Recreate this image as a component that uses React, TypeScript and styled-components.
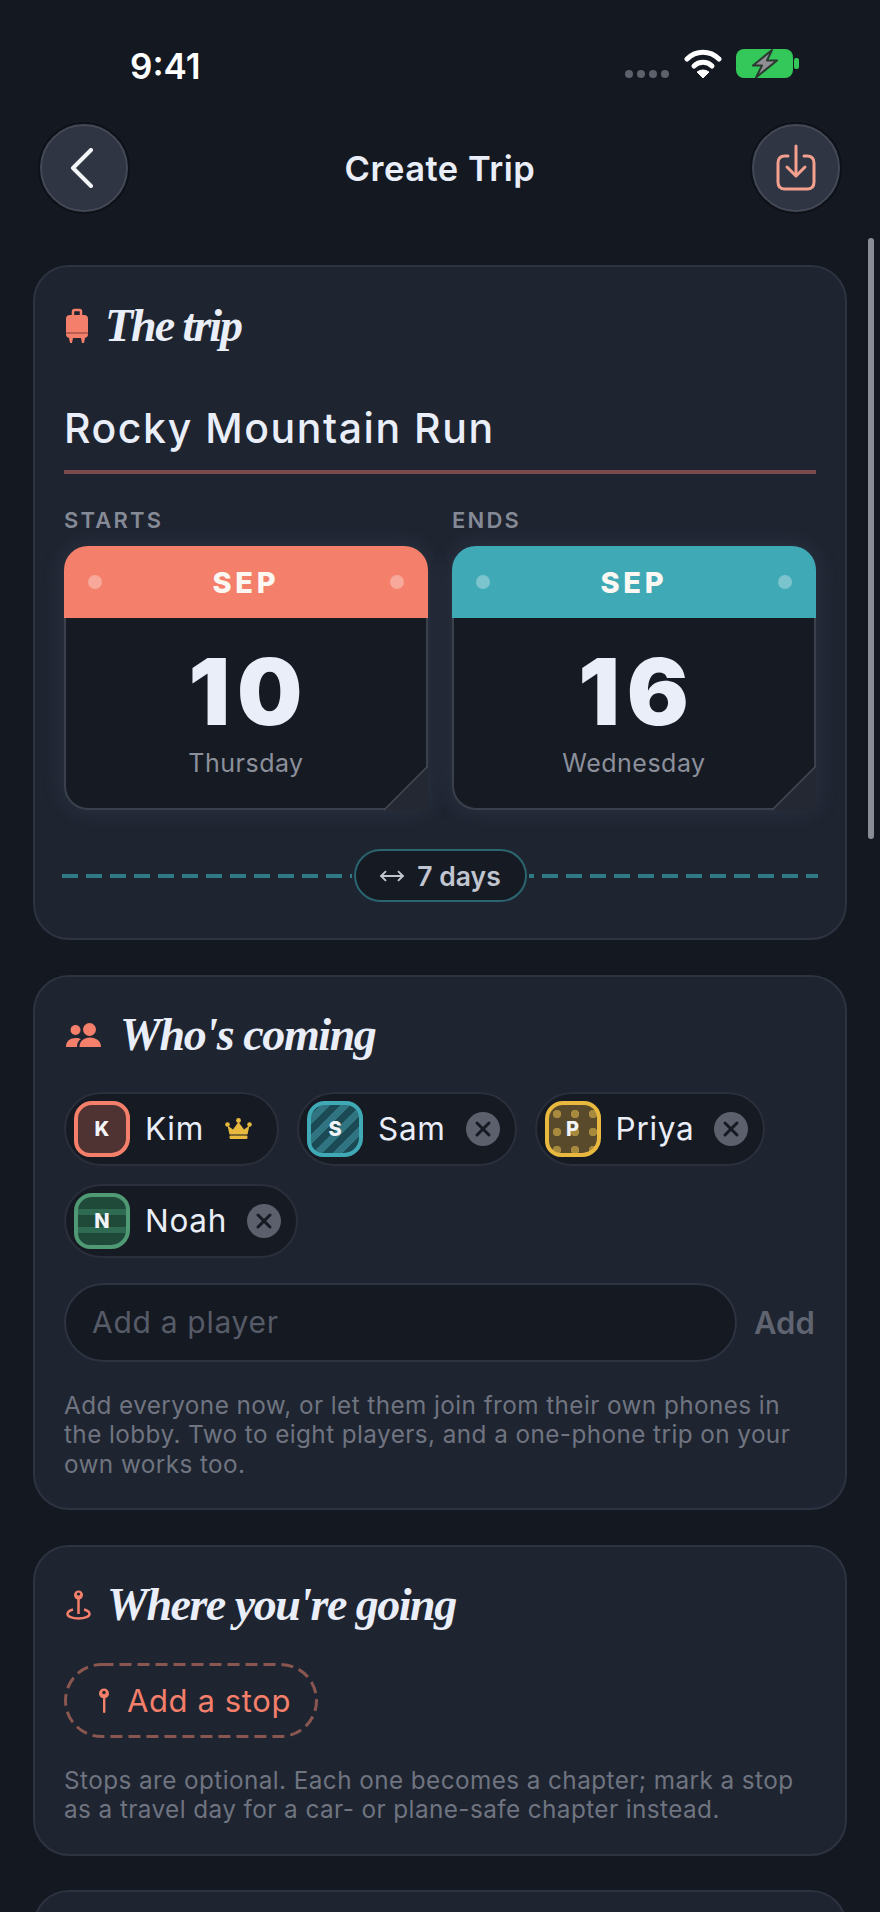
import React from 'react';
import styled, { createGlobalStyle, css } from 'styled-components';
import { MoveHorizontal, X } from 'lucide-react';

const coral = '#f47f6a';
const teal = '#3fa9b5';
const gold = '#e8b93e';
const green = '#4f9a74';

const GlobalStyle = createGlobalStyle`
  html, body {
    margin: 0;
    padding: 0;
    background: #141821;
  }
  * {
    box-sizing: border-box;
  }
`;

const Page = styled.div`
  position: relative;
  width: 880px;
  height: 1912px;
  overflow: hidden;
  background: #141821;
  color: #e9eef8;
  font-family: Inter, 'Noto Sans', sans-serif;
`;

const StatusBar = styled.div`
  height: 124px;
  padding: 44px 81px 0 130px;
  display: flex;
  justify-content: space-between;
  align-items: flex-start;
`;

const Time = styled.div`
  font-family: Inter, sans-serif;
  font-size: 35px;
  line-height: 44px;
  font-weight: 600;
  color: #fff;
`;

const StatusIcons = styled.div`
  display: flex;
  align-items: flex-start;
  gap: 14px;
  margin-top: 5px;
`;

const SignalDots = styled.div`
  display: flex;
  gap: 4px;
  margin: 21px 1px 0 0;
`;

const SignalDot = styled.span`
  width: 8px;
  height: 8px;
  border-radius: 50%;
  background: #5d616b;
`;

const Header = styled.div`
  height: 88px;
  padding: 0 40px;
  display: flex;
  justify-content: space-between;
  align-items: center;
`;

const RoundButton = styled.button`
  width: 88px;
  height: 88px;
  padding: 0;
  border-radius: 50%;
  background: #2f3542;
  border: 2px solid #434956;
  box-shadow: 0 0 0 2px #0e1118;
  display: flex;
  align-items: center;
  justify-content: center;
`;

const BackChevron = styled.svg`
  margin-right: 5px;
`;

const Title = styled.div`
  font-size: 34.5px;
  font-weight: 600;
  letter-spacing: 0.5px;
`;

const Scrollbar = styled.div`
  position: absolute;
  left: 868px;
  top: 238px;
  width: 6px;
  height: 601px;
  border-radius: 3px;
  background: #8a8d96;
`;

const List = styled.div`
  margin-top: 53px;
  padding: 0 33px;
  display: flex;
  flex-direction: column;
  gap: 34.5px;
`;

const Card = styled.section`
  background: #1e2430;
  border: 2px solid #2d3340;
  border-radius: 36px;
  padding: 33px 29px 29px;
`;

const TripCard = styled(Card)`
  padding-bottom: 36px;
`;

const SectionHead = styled.div<{ $gap: number }>`
  height: 50px;
  display: flex;
  align-items: center;
  gap: ${(p) => p.$gap}px;
  padding-left: 2px;
`;

const SectionTitle = styled.h2<{ $spacing: number }>`
  margin: 0;
  font-family: 'Liberation Serif', serif;
  font-style: italic;
  font-weight: 700;
  font-size: 46px;
  letter-spacing: ${(p) => p.$spacing}px;
  color: #e9eef8;
`;

const TripName = styled.div`
  margin-top: 55px;
  padding-bottom: 19px;
  border-bottom: 4px solid #7b4a4c;
  font-size: 41px;
  line-height: 46px;
  font-weight: 500;
  letter-spacing: 1.55px;
`;

const DateGrid = styled.div`
  margin-top: 33px;
  display: grid;
  grid-template-columns: 1fr 1fr;
  gap: 24px;
`;

const DateLabel = styled.div`
  font-size: 22px;
  line-height: 26px;
  font-weight: 600;
  letter-spacing: 2.2px;
  color: #858a96;
`;

const Calendar = styled.div`
  position: relative;
  margin-top: 13px;
  height: 264px;
  background: #161a23;
  border: 2px solid #3a404c;
  border-top: 0;
  border-radius: 24px 24px 0 24px;
  box-shadow: 0 0 24px rgba(150, 165, 195, 0.14);
  text-align: center;
`;

const CalendarTop = styled.div<{ $color: string }>`
  height: 72px;
  margin: 0 -2px;
  padding: 0 24px;
  border-radius: 24px 24px 0 0;
  background: ${(p) => p.$color};
  display: flex;
  align-items: center;
  justify-content: space-between;
`;

const Hole = styled.span`
  width: 14px;
  height: 14px;
  border-radius: 50%;
  background: rgba(255, 255, 255, 0.32);
`;

const Month = styled.span`
  font-size: 29px;
  font-weight: 800;
  letter-spacing: 3.8px;
  color: #fbf7f2;
`;

const DayNumber = styled.div`
  margin-top: 29px;
  font-size: 92px;
  line-height: 90px;
  font-weight: 900;
  letter-spacing: 7px;
  padding-left: 6px;
`;

const Weekday = styled.div`
  margin-top: 11px;
  font-size: 25px;
  line-height: 30px;
  color: #8c909b;
  letter-spacing: 0.5px;
`;

const CornerFold = styled.svg`
  position: absolute;
  right: -2px;
  bottom: -2px;
`;

const DurationRow = styled.div`
  margin: 39px -2px 0;
  height: 53px;
  display: flex;
  align-items: center;
`;

const DashRule = styled.div<{ $offset: number }>`
  flex: 1;
  height: 4px;
  background: repeating-linear-gradient(90deg, #2f7a85 0 16px, transparent 16px 24px);
  background-size: 24px 4px;
  background-position: ${(p) => p.$offset}px 0;
`;

const DurationPill = styled.div`
  width: 173px;
  height: 53px;
  margin: 0 2px;
  flex: none;
  border-radius: 27px;
  border: 2px solid #2a6570;
  background: #161a23;
  display: flex;
  align-items: center;
  justify-content: center;
  gap: 12px;
  font-size: 26.5px;
  font-weight: 600;
  color: #c0c5d0;
`;

const Chips = styled.div`
  margin-top: 32px;
  display: flex;
  flex-wrap: wrap;
  gap: 18px;
`;

const Chip = styled.div`
  height: 74px;
  padding: 0 0 0 8px;
  border-radius: 37px;
  border: 2px solid #2a2f3b;
  background: #161a23;
  display: flex;
  align-items: center;
  gap: 15px;
`;

const patterns = {
  solid: css`
    background: #4f3232;
  `,
  stripes: css`
    background: repeating-linear-gradient(135deg, #1b4a55 0 7px, #2f7480 7px 14px);
  `,
  dots: css`
    background-color: #5a4a2c;
    background-image: radial-gradient(circle, #a88a3f 4px, transparent 4.5px);
    background-size: 18px 18px;
    background-position: -1px 0;
  `,
  bars: css`
    background: repeating-linear-gradient(0deg, #1f4a3a 0 12px, #2f6a52 12px 18px);
  `,
};

const Avatar = styled.div<{ $color: string; $pattern: keyof typeof patterns }>`
  width: 56px;
  height: 56px;
  flex: none;
  border: 4px solid ${(p) => p.$color};
  border-radius: 18px 17px 19px 16px;
  ${(p) => patterns[p.$pattern]}
  display: flex;
  align-items: center;
  justify-content: center;
  font-size: 20px;
  font-weight: 800;
  color: #f2f4f8;
`;

const ChipName = styled.span`
  font-size: 31.5px;
  letter-spacing: 0.7px;
  color: #e9eef8;
`;

const HostCrown = styled.svg`
  margin: 0 25px 0 6px;
`;

const RemoveButton = styled.button`
  width: 34px;
  height: 34px;
  margin: 0 15px 0 5px;
  padding: 0;
  border: 0;
  border-radius: 50%;
  background: #5b606c;
  color: #161a23;
  display: flex;
  align-items: center;
  justify-content: center;
`;

const AddRow = styled.div`
  margin-top: 25px;
  display: flex;
  align-items: center;
  gap: 17px;
`;

const PlayerInput = styled.div`
  flex: 1;
  height: 79px;
  padding-left: 26px;
  border-radius: 40px;
  border: 2px solid #2d3340;
  background: #151922;
  display: flex;
  align-items: center;
  font-size: 30px;
  letter-spacing: 0.7px;
  color: #565b67;
`;

const AddText = styled.span`
  width: 62px;
  font-size: 31px;
  font-weight: 600;
  color: #5f6470;
`;

const Hint = styled.p<{ $top: number }>`
  margin: ${(p) => p.$top}px 0 0;
  font-size: 24.3px;
  line-height: 29.5px;
  letter-spacing: 0.42px;
  color: #6f7480;
  white-space: nowrap;
`;

const StopPill = styled.div`
  position: relative;
  width: 254px;
  height: 75px;
  margin-top: 33px;
  display: flex;
  align-items: center;
  gap: 17px;
  padding-left: 34px;
  font-size: 31px;
  letter-spacing: 0.6px;
  color: ${coral};
`;

const StopOutline = styled.svg`
  position: absolute;
  left: 0;
  top: 0;
`;

const NextCard = styled(Card)`
  height: 200px;
`;

function WifiIcon() {
  return (
    <svg width="38" height="29" viewBox="0 0 38 29">
      <path d="M3 10C12 1 26 1 35 10" fill="none" stroke="#fff" strokeWidth="5" strokeLinecap="round" />
      <path d="M10 17C15 12 23 12 28 17" fill="none" stroke="#fff" strokeWidth="5" strokeLinecap="round" />
      <path d="M13 23Q19 19 25 23L19 29Z" fill="#fff" stroke="#fff" strokeLinejoin="round" />
    </svg>
  );
}

function BatteryIcon() {
  return (
    <svg width="63" height="29" viewBox="0 0 63 29">
      <rect x="0" y="0" width="57" height="29" rx="8" fill="#34c759" />
      <rect x="58" y="9" width="5" height="11" rx="2" fill="#34c759" />
      <path d="M36 1L17 16.5H26L20 28.5L41 11.5H31Z" fill="#8e8e93" stroke="#2a3a30" strokeWidth="2" strokeLinejoin="round" />
    </svg>
  );
}

function SuitcaseIcon() {
  return (
    <svg width="22" height="35" viewBox="0 0 22 35">
      <path d="M7 8V3.5Q7 2 8.5 2H13.5Q15 2 15 3.5V8" fill="none" stroke={coral} strokeWidth="2.5" />
      <rect x="0" y="7" width="22" height="23" rx="4" fill={coral} />
      <rect x="0" y="24" width="22" height="2" fill="#b85f50" />
      <path d="M3 30H7L6 35H4ZM15 30H19L18 35H16Z" fill={coral} />
    </svg>
  );
}

function PeopleIcon() {
  return (
    <svg width="35" height="24" viewBox="0 0 35 24" fill={coral}>
      <circle cx="9.5" cy="7" r="5" />
      <circle cx="23.5" cy="6.5" r="6.5" />
      <path d="M0 24C0 18 4 15 10 15C12 15 13.5 15.5 15 16C12 18 11 20.5 11 24Z" />
      <path d="M13.5 24C13.5 18 18 14.5 24 14.5C30 14.5 35 18 35 24Z" />
    </svg>
  );
}

function MapPinIcon() {
  return (
    <svg width="25" height="31" viewBox="0 0 25 31" fill="none" stroke={coral} strokeWidth="2.5">
      <circle cx="12.5" cy="6" r="4.5" fill={coral} stroke="none" />
      <circle cx="12.5" cy="5" r="1.6" fill="#1e2430" stroke="none" />
      <path d="M12.5 10V25" />
      <path d="M7 20.5C3.5 21.5 1.5 23 1.5 25C1.5 27.5 6 29.5 12.5 29.5C19 29.5 23.5 27.5 23.5 25C23.5 23 21.5 21.5 18 20.5" />
    </svg>
  );
}

function StopPinIcon() {
  return (
    <svg width="12" height="25" viewBox="0 0 12 25">
      <circle cx="6" cy="5.5" r="5" fill={coral} />
      <circle cx="6" cy="4.5" r="1.7" fill="#1e2430" />
      <rect x="5" y="10" width="2.4" height="15" rx="1" fill={coral} />
    </svg>
  );
}

function Crown() {
  return (
    <HostCrown width="27" height="21" viewBox="0 0 27 21" fill={gold}>
      <circle cx="2.5" cy="6.5" r="2.3" />
      <circle cx="13.5" cy="2.5" r="2.4" />
      <circle cx="24.5" cy="6.5" r="2.3" />
      <path d="M2.5 7.5L8 11.5L13.5 4L19 11.5L24.5 7.5L22.5 16.5H4.5Z" />
      <rect x="4.5" y="17.5" width="18" height="3.5" rx="1.2" />
    </HostCrown>
  );
}

function DateCard({ label, color, day, weekday }: { label: string; color: string; day: string; weekday: string }) {
  return (
    <div>
      <DateLabel>{label}</DateLabel>
      <Calendar>
        <CalendarTop $color={color}>
          <Hole />
          <Month>SEP</Month>
          <Hole />
        </CalendarTop>
        <DayNumber>{day}</DayNumber>
        <Weekday>{weekday}</Weekday>
        <CornerFold width="44" height="44" viewBox="0 0 44 44">
          <path d="M0 44L44 0V44Z" fill="#232833" />
          <path d="M0 44L44 0" stroke="#454a55" strokeWidth="1.5" />
        </CornerFold>
      </Calendar>
    </div>
  );
}

type Player = {
  name: string;
  color: string;
  pattern: keyof typeof patterns;
  host?: boolean;
};

const players: Player[] = [
  { name: 'Kim', color: coral, pattern: 'solid', host: true },
  { name: 'Sam', color: teal, pattern: 'stripes' },
  { name: 'Priya', color: gold, pattern: 'dots' },
  { name: 'Noah', color: green, pattern: 'bars' },
];

export default function App() {
  return (
    <Page>
      <GlobalStyle />
      <StatusBar>
        <Time>9:41</Time>
        <StatusIcons>
          <SignalDots>
            <SignalDot />
            <SignalDot />
            <SignalDot />
            <SignalDot />
          </SignalDots>
          <WifiIcon />
          <BatteryIcon />
        </StatusIcons>
      </StatusBar>

      <Header>
        <RoundButton aria-label="Back">
          <BackChevron width="26" height="40" viewBox="0 0 26 40" fill="none" stroke="#f2f4f8" strokeWidth="4" strokeLinecap="round" strokeLinejoin="round">
            <path d="M22 2L4 20L22 38" />
          </BackChevron>
        </RoundButton>
        <Title>Create Trip</Title>
        <RoundButton aria-label="Save">
          <svg width="40" height="48" viewBox="0 0 40 48" fill="none" stroke="#f4a08f" strokeWidth="3" strokeLinecap="round" strokeLinejoin="round">
            <path d="M12 12H9Q2 12 2 19V38Q2 45 9 45H31Q38 45 38 38V19Q38 12 31 12H28" />
            <path d="M20 2V31" />
            <path d="M11 23L20 32L29 23" />
          </svg>
        </RoundButton>
      </Header>

      <List>
        <TripCard>
          <SectionHead $gap={17}>
            <SuitcaseIcon />
            <SectionTitle $spacing={-2}>The trip</SectionTitle>
          </SectionHead>
          <TripName>Rocky Mountain Run</TripName>
          <DateGrid>
            <DateCard label="STARTS" color={coral} day="10" weekday="Thursday" />
            <DateCard label="ENDS" color={teal} day="16" weekday="Wednesday" />
          </DateGrid>
          <DurationRow>
            <DashRule $offset={0} />
            <DurationPill>
              <MoveHorizontal size={26} strokeWidth={1.8} />
              7 days
            </DurationPill>
            <DashRule $offset={13} />
          </DurationRow>
        </TripCard>

        <Card>
          <SectionHead $gap={19}>
            <PeopleIcon />
            <SectionTitle $spacing={-1.4}>Who's coming</SectionTitle>
          </SectionHead>
          <Chips>
            {players.map((player) => (
              <Chip key={player.name}>
                <Avatar $color={player.color} $pattern={player.pattern}>{player.name[0]}</Avatar>
                <ChipName>{player.name}</ChipName>
                {player.host ? (
                  <Crown />
                ) : (
                  <RemoveButton aria-label={`Remove ${player.name}`}>
                    <X size={24} strokeWidth={3} />
                  </RemoveButton>
                )}
              </Chip>
            ))}
          </Chips>
          <AddRow>
            <PlayerInput>Add a player</PlayerInput>
            <AddText>Add</AddText>
          </AddRow>
          <Hint $top={29}>
            Add everyone now, or let them join from their own phones in
            <br />
            the lobby. Two to eight players, and a one-phone trip on your
            <br />
            own works too.
          </Hint>
        </Card>

        <Card>
          <SectionHead $gap={16}>
            <MapPinIcon />
            <SectionTitle $spacing={-1.5}>Where you're going</SectionTitle>
          </SectionHead>
          <StopPill>
            <StopOutline width="254" height="75" viewBox="0 0 254 75" fill="none">
              <rect x="1.5" y="1.5" width="251" height="72" rx="36" stroke="#8a5650" strokeWidth="3" strokeDasharray="12 6" />
            </StopOutline>
            <StopPinIcon />
            Add a stop
          </StopPill>
          <Hint $top={28}>
            Stops are optional. Each one becomes a chapter; mark a stop
            <br />
            as a travel day for a car- or plane-safe chapter instead.
          </Hint>
        </Card>

        <NextCard />
      </List>

      <Scrollbar />
    </Page>
  );
}
